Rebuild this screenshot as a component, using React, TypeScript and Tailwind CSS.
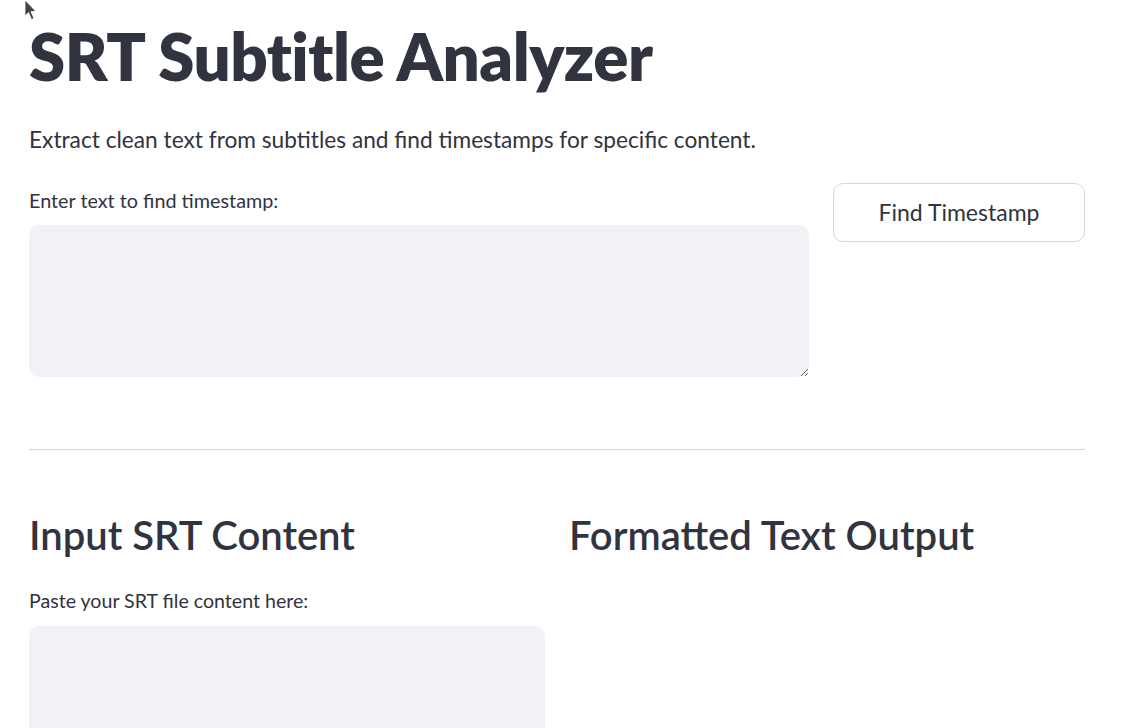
import { useState } from "react";

export default function App() {
  const [query, setQuery] = useState("");
  const [srt, setSrt] = useState("");

  return (
    <div
      className="relative min-h-screen w-[1133px] overflow-hidden bg-white text-[#31333F]"
      style={{ fontFamily: "Lato, 'Noto Sans', sans-serif" }}
    >
      {/* mouse pointer left in the capture */}
      <svg className="absolute left-[24px] top-0" width="14" height="22" viewBox="0 0 14 22">
        <path d="M1 0 L1 16 L4.5 12.5 L7.5 19.5 L10 18.5 L7 11.5 L12 11.5 Z" fill="#444" stroke="#fff" strokeWidth="0.8" />
      </svg>

      <div className="flex flex-col px-[29px] pr-[48px]">
        <h1 className="mt-[16px] text-[65.4px] font-extrabold leading-[80px] tracking-[-0.5px]">SRT Subtitle Analyzer</h1>

        <p className="mt-[29px] text-[22.7px] leading-[30px]">
          Extract clean text from subtitles and find timestamps for specific content.
        </p>

        {/* search row */}
        <div className="mt-[27px] flex gap-[24px]">
          <div className="flex w-[780px] flex-col">
            <label className="pt-[3px] text-[19.8px] leading-[30px]">Enter text to find timestamp:</label>
            <textarea
              value={query}
              onChange={(e) => setQuery(e.target.value)}
              className="mt-[10px] h-[152px] w-full resize-y rounded-[10px] bg-[#f0f2f6] px-4 py-3 text-[20px] outline-none"
            />
          </div>
          <div className="pt-[1px]">
            <button className="h-[59px] w-[252px] rounded-[10px] border border-[#d6d6d9] bg-white text-[23px] text-[#31333F]">
              Find Timestamp
            </button>
          </div>
        </div>

        <hr className="mt-[72px] border-t border-[#d6d6d9]" />

        {/* two columns */}
        <div className="mt-[61px] grid grid-cols-2 gap-[24px]">
          <div className="flex flex-col">
            <h2 className="text-[40px] font-semibold leading-[48px]">Input SRT Content</h2>
            <label className="mt-[27px] text-[19.6px] leading-[30px]">Paste your SRT file content here:</label>
            <textarea
              value={srt}
              onChange={(e) => setSrt(e.target.value)}
              className="mt-[10px] h-[300px] w-full resize-y rounded-[10px] bg-[#f0f2f6] px-4 py-3 text-[20px] outline-none"
            />
          </div>
          <div className="flex flex-col">
            <h2 className="text-[40px] font-semibold leading-[48px]">Formatted Text Output</h2>
          </div>
        </div>
      </div>
    </div>
  );
}
